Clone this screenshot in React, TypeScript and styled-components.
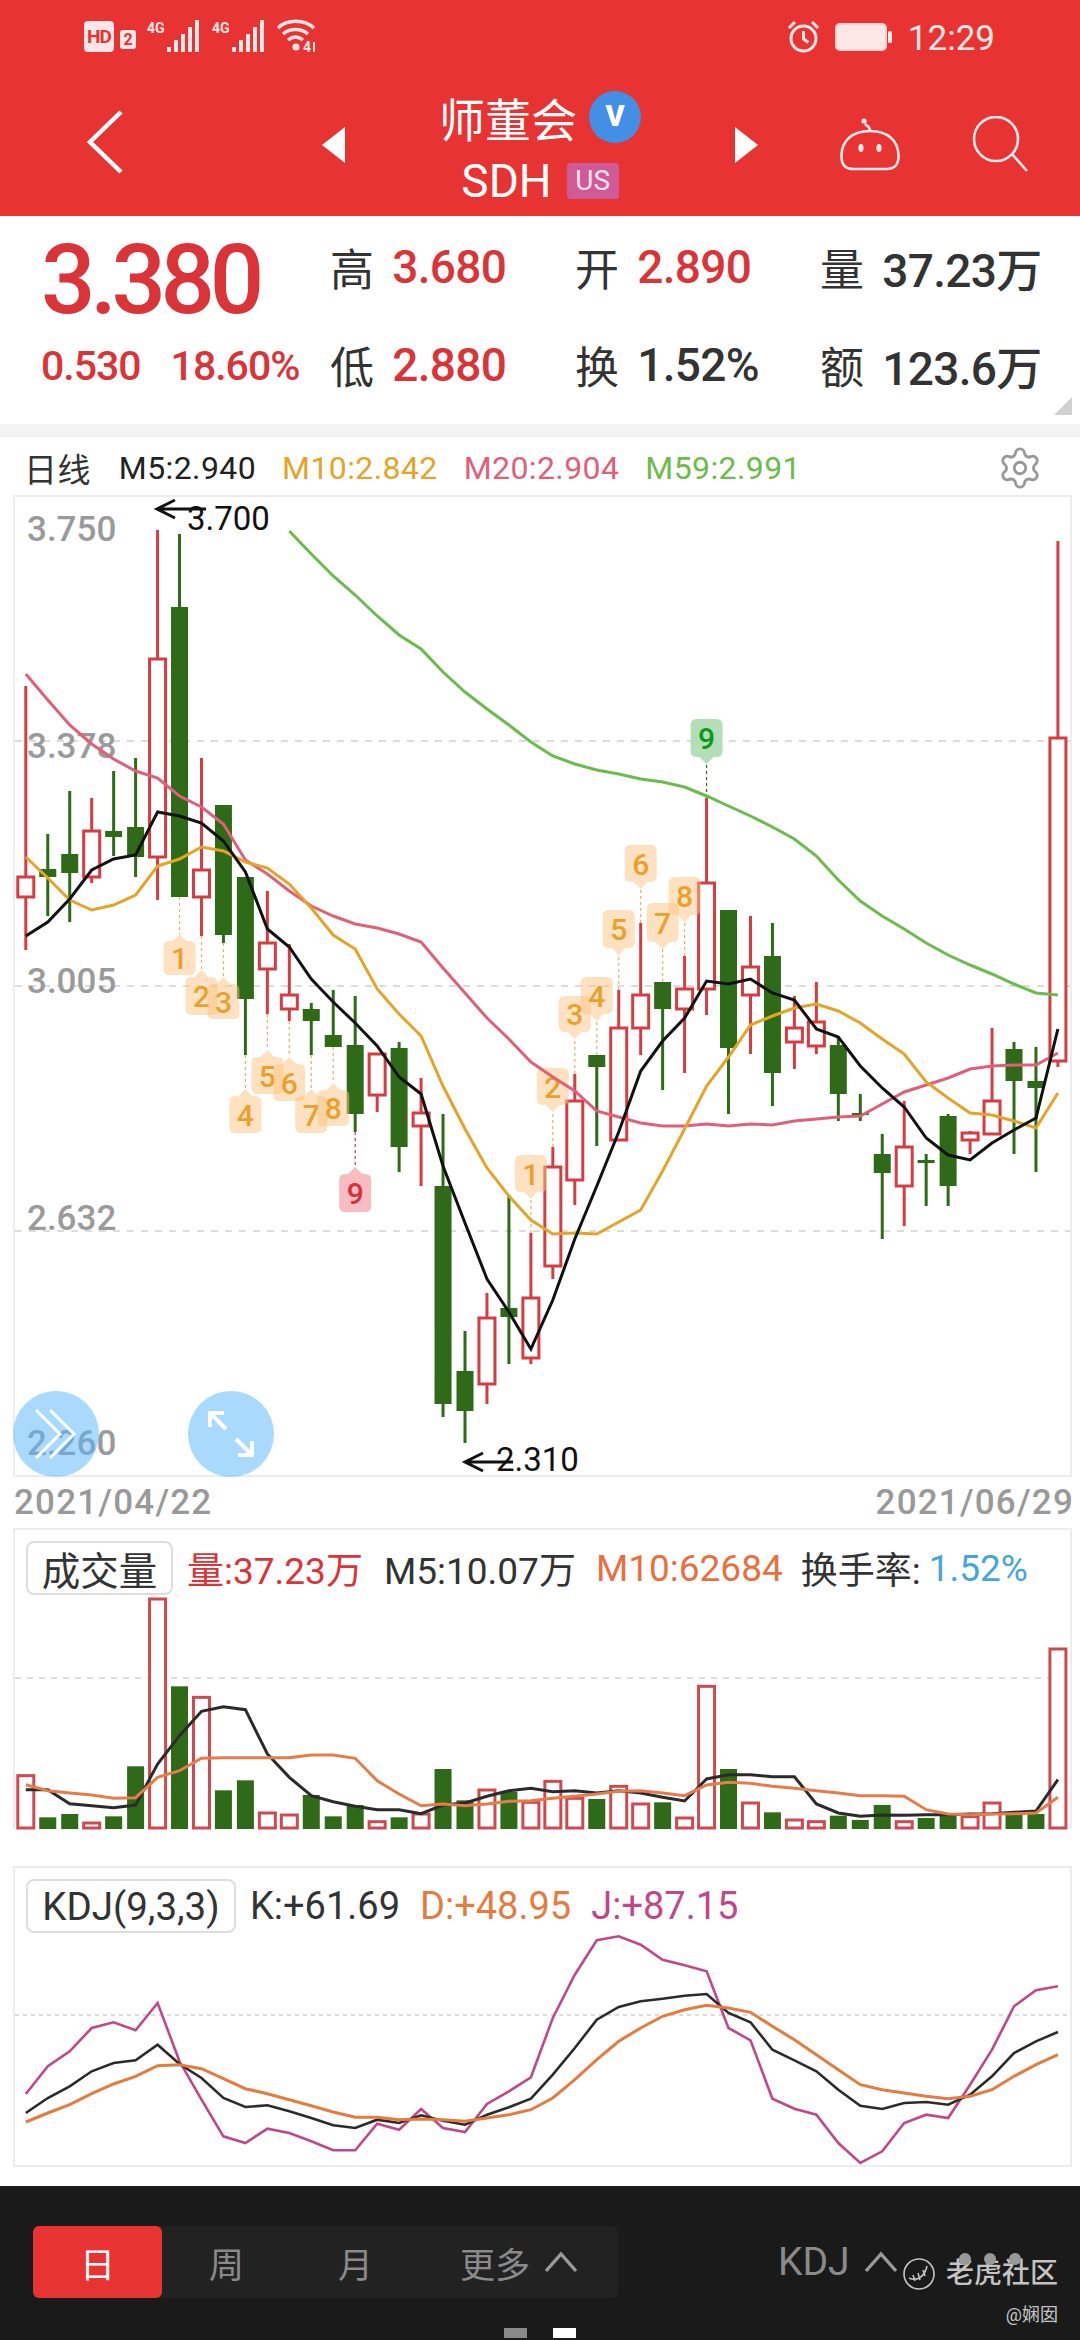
import React from "react";
import styled, { createGlobalStyle } from "styled-components";
import { Settings } from "lucide-react";

const FONT = `Roboto, "Noto Sans CJK SC", sans-serif`;
const RED = "#e83333";
const UP = "#d63c42";
const DOWN = "#2f6a18";

const GlobalStyle = createGlobalStyle`
  html, body { margin: 0; padding: 0; background: #fff; }
  body { font-family: ${FONT}; }
`;

// page coordinates of each session, so the arrays below read like the screen
const px = (i: number) => 25.8 + 21.96 * i;

type Candle = [number, number, number, number, "r" | "g"];

const candles: Candle[] = [
  [686, 950, 877, 897, "r"], [834, 916, 869, 877, "g"], [791, 922, 854, 873, "g"], [798, 883, 831, 877, "r"],
  [771, 856, 831, 837, "g"], [758, 877, 827, 857, "g"], [530, 900, 659, 857, "r"], [534, 897, 607, 897, "g"],
  [758, 936, 870, 897, "r"], [805, 943, 805, 935, "g"], [877, 1055, 877, 999, "g"], [891, 1014, 943, 969, "r"],
  [944, 1021, 995, 1009, "r"], [1003, 1055, 1009, 1021, "g"], [990, 1047, 1035, 1047, "g"], [996, 1132, 1045, 1114, "g"],
  [1054, 1112, 1054, 1095, "r"], [1042, 1172, 1048, 1147, "g"], [1078, 1186, 1113, 1126, "r"], [1114, 1417, 1186, 1404, "g"],
  [1331, 1443, 1371, 1411, "g"], [1293, 1404, 1318, 1384, "r"], [1195, 1364, 1308, 1317, "g"], [1233, 1364, 1298, 1358, "r"],
  [1147, 1279, 1167, 1266, "r"], [1074, 1205, 1101, 1180, "r"], [1055, 1146, 1055, 1067, "g"], [990, 1140, 1028, 1140, "r"],
  [923, 1055, 995, 1028, "r"], [982, 1090, 982, 1009, "g"], [956, 1073, 989, 1009, "r"], [798, 1015, 883, 989, "r"],
  [910, 1114, 910, 1048, "g"], [916, 1054, 967, 995, "r"], [923, 1106, 956, 1073, "g"], [996, 1069, 1028, 1042, "r"],
  [982, 1054, 1022, 1046, "r"], [1038, 1121, 1045, 1094, "g"], [1094, 1121, 1113, 1115, "g"], [1134, 1239, 1154, 1173, "g"],
  [1101, 1226, 1147, 1186, "r"], [1154, 1206, 1160, 1163, "g"], [1114, 1206, 1116, 1186, "g"], [1131, 1154, 1133, 1140, "r"],
  [1028, 1134, 1101, 1134, "r"], [1042, 1154, 1049, 1081, "g"], [1047, 1172, 1081, 1088, "g"], [541, 1067, 738, 1061, "r"],
];

const m5 = [936, 922, 899, 870, 859, 855, 812, 816, 823, 841, 872, 929, 947, 979, 1002, 1023, 1046, 1077, 1094, 1166, 1223, 1279, 1312, 1349, 1300, 1239, 1186, 1132, 1071, 1041, 1018, 981, 984, 979, 993, 1000, 1029, 1037, 1066, 1088, 1107, 1138, 1155, 1160, 1143, 1130, 1118, 1029];
const m10 = [857, 878, 900, 910, 905, 895, 866, 859, 847, 851, 862, 868, 884, 908, 935, 949, 989, 1014, 1036, 1086, 1129, 1168, 1196, 1220, 1234, 1233, 1234, 1222, 1210, 1171, 1129, 1086, 1057, 1025, 1016, 1008, 1004, 1011, 1023, 1039, 1054, 1082, 1098, 1113, 1115, 1121, 1128, 1093];
const m20 = [674, 700, 725, 744, 759, 771, 778, 796, 807, 824, 860, 874, 891, 906, 916, 924, 928, 934, 942, 968, 993, 1018, 1039, 1062, 1077, 1091, 1111, 1117, 1123, 1126, 1126, 1124, 1126, 1124, 1125, 1121, 1119, 1117, 1116, 1104, 1092, 1085, 1078, 1069, 1066, 1065, 1065, 1053];
const m59 = [531, 554, 576, 595, 616, 635, 649, 672, 692, 709, 725, 742, 756, 764, 770, 774, 779, 782, 787, 796, 806, 816, 827, 839, 856, 880, 901, 916, 929, 943, 955, 965, 974, 984, 993, 995];

// badges sit under the candle (tip up) for the first run, over it for the second
type Badge = { i: number; top: number; bottom: number; from: number; label: string; tip: "up" | "down"; kind?: "sell" | "buy" };
const badges: Badge[] = [
  { i: 7, top: 934, bottom: 975, from: 897, label: "1", tip: "up" },
  { i: 8, top: 970, bottom: 1015, from: 936, label: "2", tip: "up" },
  { i: 9, top: 977, bottom: 1019, from: 943, label: "3", tip: "up" },
  { i: 10, top: 1089, bottom: 1133, from: 1055, label: "4", tip: "up" },
  { i: 11, top: 1050, bottom: 1094, from: 1014, label: "5", tip: "up" },
  { i: 12, top: 1057, bottom: 1101, from: 1021, label: "6", tip: "up" },
  { i: 13, top: 1089, bottom: 1133, from: 1055, label: "7", tip: "up" },
  { i: 14, top: 1083, bottom: 1126, from: 1047, label: "8", tip: "up" },
  { i: 15, top: 1167, bottom: 1212, from: 1132, label: "9", tip: "up", kind: "sell" },
  { i: 23, top: 1155, bottom: 1199, from: 1233, label: "1", tip: "down" },
  { i: 24, top: 1068, bottom: 1112, from: 1147, label: "2", tip: "down" },
  { i: 25, top: 996, bottom: 1039, from: 1074, label: "3", tip: "down" },
  { i: 26, top: 977, bottom: 1021, from: 1055, label: "4", tip: "down" },
  { i: 27, top: 910, bottom: 955, from: 990, label: "5", tip: "down" },
  { i: 28, top: 845, bottom: 889, from: 923, label: "6", tip: "down" },
  { i: 29, top: 903, bottom: 949, from: 982, label: "7", tip: "down" },
  { i: 30, top: 877, bottom: 922, from: 956, label: "8", tip: "down" },
  { i: 31, top: 719, bottom: 764, from: 798, label: "9", tip: "down", kind: "buy" },
];

const volumeTops = [770, 895, 885, 912, 892, 742, 240, 502, 535, 814, 784, 882, 888, 828, 892, 858, 908, 895, 885, 750, 844, 813, 818, 850, 787, 838, 840, 802, 855, 850, 897, 502, 750, 852, 880, 903, 908, 890, 903, 858, 908, 897, 890, 893, 852, 888, 885, 390];
const volM5 = [812, 812, 854, 860, 866, 858, 735, 650, 577, 563, 572, 705, 775, 830, 848, 862, 872, 872, 884, 858, 852, 832, 815, 808, 818, 815, 822, 815, 822, 835, 846, 780, 767, 767, 773, 773, 855, 882, 892, 888, 889, 887, 887, 885, 884, 880, 876, 782];
const volM10 = [797, 815, 822, 828, 838, 836, 775, 755, 718, 716, 716, 716, 716, 708, 708, 718, 785, 825, 860, 855, 860, 855, 847, 845, 838, 832, 825, 817, 815, 822, 830, 798, 790, 793, 802, 808, 815, 822, 830, 830, 832, 872, 885, 887, 885, 884, 882, 835];

const kdjJ = [798, 715, 670, 600, 583, 607, 525, 700, 815, 925, 945, 902, 915, 940, 967, 967, 887, 905, 843, 900, 912, 828, 790, 748, 570, 440, 337, 325, 350, 395, 412, 430, 600, 637, 812, 842, 860, 945, 1005, 970, 885, 860, 870, 770, 665, 535, 487, 475];
const kdjK = [855, 810, 775, 730, 705, 697, 650, 708, 750, 810, 837, 832, 850, 870, 892, 900, 875, 885, 862, 878, 890, 860, 838, 812, 740, 660, 575, 537, 520, 512, 503, 498, 555, 583, 665, 697, 730, 785, 833, 843, 825, 822, 830, 800, 745, 675, 640, 612];
const kdjD = [882, 855, 830, 797, 768, 745, 713, 710, 722, 752, 782, 797, 815, 833, 852, 868, 868, 875, 873, 875, 880, 870, 860, 845, 810, 755, 695, 640, 600, 565, 545, 532, 540, 553, 595, 635, 680, 725, 770, 785, 795, 805, 812, 805, 785, 745, 710, 680];

const polyline = (ys: number[], offset = 0, map: (y: number) => number = y => y) =>
  ys.map((y, i) => `${px(i + offset).toFixed(1)},${map(y).toFixed(1)}`).join(" ");

const badgePath = (cx: number, top: number, bottom: number, tip: "up" | "down") => {
  const l = cx - 16, r = cx + 16, c = 6, t = 7;
  if (tip === "up") {
    return `M${cx} ${top} L${cx + 7} ${top + t} H${r - c} Q${r} ${top + t} ${r} ${top + t + c} V${bottom - c} Q${r} ${bottom} ${r - c} ${bottom} H${l + c} Q${l} ${bottom} ${l} ${bottom - c} V${top + t + c} Q${l} ${top + t} ${l + c} ${top + t} H${cx - 7} Z`;
  }
  return `M${l + c} ${top} H${r - c} Q${r} ${top} ${r} ${top + c} V${bottom - t - c} Q${r} ${bottom - t} ${r - c} ${bottom - t} H${cx + 7} L${cx} ${bottom} L${cx - 7} ${bottom - t} H${l + c} Q${l} ${bottom - t} ${l} ${bottom - t - c} V${top + c} Q${l} ${top} ${l + c} ${top} Z`;
};

const badgeColors = {
  sell: { fill: "#f6bcc1", ink: "#d8303a", dot: "#b5434b" },
  buy: { fill: "#b4deb8", ink: "#0a9a1c", dot: "#2f6a18" },
  count: { fill: "rgba(252, 196, 130, 0.5)", ink: "#e9a02c", dot: "#e8b060" },
};

const Page = styled.div`
  width: 1080px;
  height: 2340px;
  overflow: hidden;
  background: #fff;
  display: flex;
  flex-direction: column;
`;

const Header = styled.header`
  height: 216px;
  background: ${RED};
  color: #fff;
  display: flex;
  flex-direction: column;
`;

const StatusBar = styled.div`
  height: 70px;
  padding: 20px 85px 0 84px;
  box-sizing: border-box;
  display: flex;
  align-items: flex-start;
  color: #fde6e6;
`;

const StatusGroup = styled.div`
  display: flex;
  align-items: flex-start;
  gap: 11px;
`;

const HdMark = styled.span`
  width: 30px;
  height: 31px;
  margin-top: 1px;
  border-radius: 4px;
  background: #fde6e6;
  color: ${RED};
  font-size: 19px;
  font-weight: 700;
  line-height: 31px;
  text-align: center;
  letter-spacing: -1px;
`;

const SimMark = styled.span`
  width: 16px;
  height: 19px;
  margin: 10px 0 0 -5px;
  border-radius: 3px;
  background: #fde6e6;
  color: ${RED};
  font-size: 16px;
  font-weight: 700;
  line-height: 19px;
  text-align: center;
`;

const Clock = styled.span`
  font-size: 35px;
  line-height: 36px;
  margin-top: 1px;
`;

const StatusRight = styled(StatusGroup)`
  margin-left: auto;
  gap: 15px;
`;

const NavBar = styled.nav`
  height: 146px;
  display: flex;
  align-items: flex-start;
  padding-left: 86px;
`;

const BackIcon = styled.svg`
  width: 38px;
  height: 64px;
  margin-top: 40px;
  flex: none;
`;

const Switcher = styled.div`
  width: 436px;
  margin: 57px 0 0 198px;
  display: flex;
  align-items: flex-start;
  justify-content: space-between;
  height: 35px;
`;

const Triangle = styled.span<{ $dir: "left" | "right" }>`
  width: 0;
  height: 0;
  border-top: 18px solid transparent;
  border-bottom: 18px solid transparent;
  ${({ $dir }) => ($dir === "left" ? "border-right: 23px solid #fff;" : "border-left: 23px solid #fff;")}
`;

const TitleBlock = styled.div`
  margin-top: -38px;
  display: flex;
  flex-direction: column;
  align-items: center;
`;

const NameRow = styled.div`
  display: flex;
  align-items: center;
  gap: 12px;
  height: 56px;
`;

const Name = styled.span`
  font-size: 46px;
  line-height: 56px;
  margin-top: 8px;
`;

const VerifiedBadge = styled.span`
  width: 52px;
  height: 52px;
  border-radius: 50%;
  background: #438fe6;
  font-size: 29px;
  font-weight: 900;
  line-height: 50px;
  text-align: center;
`;

const SymbolRow = styled.div`
  margin-top: 18px;
  display: flex;
  align-items: center;
  gap: 15px;
`;

const SymbolText = styled.span`
  font-size: 46px;
  line-height: 36px;
`;

const MarketTag = styled.span`
  width: 52px;
  height: 36px;
  border-radius: 3px;
  background: #cf5a96;
  color: #fbe2ee;
  font-size: 28px;
  line-height: 36px;
  text-align: center;
`;

const NavIcons = styled.div`
  margin: 46px 0 0 82px;
  display: flex;
  gap: 72px;
`;

const Quote = styled.section`
  position: relative;
  height: 208px;
  box-sizing: border-box;
  padding-top: 2px;
  display: flex;
`;

const PriceColumn = styled.div`
  width: 330px;
  padding-left: 41px;
  box-sizing: border-box;
`;

const Price = styled.div`
  margin-top: 18px;
  height: 88px;
  color: #da3338;
  font-size: 96px;
  font-weight: 500;
  line-height: 88px;
  letter-spacing: -5.4px;
`;

const Change = styled.div`
  display: flex;
  gap: 30px;
  color: #da3338;
  font-size: 41px;
  font-weight: 500;
  line-height: 84px;
  letter-spacing: -1px;
`;

const Stats = styled.div`
  display: grid;
  grid-template-columns: 245px 245px 245px;
  grid-auto-rows: 98px;
`;

const Stat = styled.div<{ $up?: boolean }>`
  display: flex;
  align-items: center;
  gap: 19px;
  color: ${({ $up }) => ($up ? "#da3338" : "#333")};
  font-size: 46px;
  font-weight: 500;
  letter-spacing: -0.7px;
`;

const StatLabel = styled.span`
  color: #333;
  font-size: 44px;
  font-weight: 400;
`;

const CornerMark = styled.span`
  position: absolute;
  right: 8px;
  bottom: 9px;
  width: 0;
  height: 0;
  border-left: 18px solid transparent;
  border-bottom: 18px solid #d0d0d0;
`;

const Divider = styled.div`
  height: 13px;
  background: #f3f3f3;
`;

const Legend = styled.div`
  height: 58px;
  box-sizing: border-box;
  padding: 4px 0 0 24px;
  display: flex;
  align-items: center;
  font-size: 32px;
  letter-spacing: 0.4px;
`;

const LegendTitle = styled.span`
  color: #333;
  font-size: 33px;
  margin-right: 28px;
`;

const LegendItem = styled.span<{ $color: string }>`
  color: ${({ $color }) => $color};
  margin-right: 26px;
`;

const GearSlot = styled.span`
  margin: 0 37px 0 auto;
  display: flex;
  color: #999;
`;

const ChartPanel = styled.div`
  position: relative;
  width: 1059px;
  height: 982px;
  margin-left: 13px;
  box-sizing: border-box;
  border: 2px solid #ececec;
`;

const Plot = styled.svg`
  display: block;
  overflow: visible;
`;

const AxisText = styled.text`
  font-family: ${FONT};
  font-size: 35px;
  font-weight: 500;
  fill: #9a9a9a;
`;

const ExtremeText = styled.text`
  font-family: ${FONT};
  font-size: 33px;
  fill: #111;
`;

const BadgeText = styled.text`
  font-family: ${FONT};
  font-size: 30px;
  font-weight: 500;
  text-anchor: middle;
`;

const RoundButton = styled.div<{ $left: number }>`
  position: absolute;
  left: ${({ $left }) => $left}px;
  bottom: -2px;
  width: 86px;
  height: 86px;
  border-radius: 50%;
  background: rgba(90, 185, 253, 0.52);
  display: flex;
  align-items: center;
  justify-content: center;
`;

const DateRow = styled.div`
  height: 50px;
  padding: 0 6px 0 14px;
  display: flex;
  justify-content: space-between;
  align-items: center;
  color: #999;
  font-size: 35px;
  font-weight: 500;
  letter-spacing: 1.2px;
`;

const IndicatorPanel = styled.div<{ $gap: number }>`
  width: 1059px;
  height: 301px;
  margin: ${({ $gap }) => $gap}px 0 0 13px;
  box-sizing: border-box;
  border: 2px solid #ececec;
  display: flex;
  flex-direction: column;
`;

const VolumePanel = styled(IndicatorPanel)`
  border-bottom: none;
`;

const PanelHead = styled.div<{ $size: number }>`
  height: 54px;
  margin-top: 11px;
  padding-left: 11px;
  display: flex;
  align-items: center;
  font-size: ${({ $size }) => $size}px;
  color: #333;
`;

const IndicatorTag = styled.span<{ $width: number }>`
  width: ${({ $width }) => $width}px;
  height: 54px;
  box-sizing: border-box;
  border: 2px solid #ddd;
  border-radius: 8px;
  display: flex;
  align-items: center;
  justify-content: center;
  margin-right: 14px;
  font-size: 38.5px;
  white-space: nowrap;
`;

const Reading = styled.span<{ $color?: string; $gap?: number }>`
  color: ${({ $color }) => $color || "#333"};
  margin-right: ${({ $gap }) => $gap ?? 20}px;
  white-space: nowrap;
`;

const BottomBar = styled.footer`
  position: relative;
  margin-top: 19px;
  height: 154px;
  background: #1a1a1a;
  display: flex;
  flex-direction: column;
`;

const ToolRow = styled.div`
  margin-top: 40px;
  padding-left: 33px;
  display: flex;
  align-items: center;
`;

const Periods = styled.div`
  width: 585px;
  height: 72px;
  border-radius: 6px;
  background: #222;
  display: flex;
`;

const PeriodTab = styled.span<{ $active?: boolean; $wide?: boolean }>`
  width: ${({ $wide }) => ($wide ? "198px" : "129px")};
  box-sizing: border-box;
  border-radius: 6px;
  display: flex;
  align-items: center;
  justify-content: center;
  gap: 14px;
  font-size: 35px;
  color: ${({ $active }) => ($active ? "#fff" : "#8a8a8a")};
  background: ${({ $active }) => ($active ? RED : "transparent")};
`;

const KdjSwitch = styled.span`
  margin-left: 160px;
  display: flex;
  align-items: center;
  gap: 14px;
  color: #8a8a8a;
  font-size: 39px;
`;

const Pager = styled.div`
  margin-top: 30px;
  display: flex;
  justify-content: center;
  gap: 26px;
  padding-right: 0;
`;

const PagerMark = styled.span<{ $active?: boolean }>`
  width: 23px;
  height: 10px;
  background: ${({ $active }) => ($active ? "#fff" : "#8a8a8a")};
`;

const Watermark = styled.div`
  position: absolute;
  right: 22px;
  top: 71px;
  display: flex;
  flex-direction: column;
  align-items: flex-end;
  color: #c4c4c4;
`;

const WatermarkLine = styled.div`
  position: relative;
  display: flex;
  align-items: center;
  gap: 11px;
  font-size: 28px;
  line-height: 34px;
  font-weight: 500;
`;

const WatermarkDots = styled.span`
  position: absolute;
  left: 56px;
  top: -4px;
  display: flex;
  gap: 13px;
`;

const WatermarkDot = styled.span`
  width: 12px;
  height: 12px;
  border-radius: 50%;
  background: #999;
`;

const WatermarkUser = styled.div`
  margin-top: 14px;
  font-size: 18px;
  line-height: 20px;
`;

function Signal () {
  return (
    <svg width="54" height="33" viewBox="0 0 54 33" overflow="visible">
      <text x="0" y="13" fontSize="14" fontWeight="700" fontFamily="Roboto" fill="currentColor">4G</text>
      <g fill="currentColor">
        <rect x="20" y="27" width="4" height="5" />
        <rect x="27" y="20" width="4" height="12" />
        <rect x="34" y="14" width="4" height="18" />
        <rect x="41" y="7" width="4" height="25" />
        <rect x="48" y="0" width="4" height="32" />
      </g>
    </svg>
  );
}

function Wifi () {
  return (
    <svg width="40" height="33" viewBox="0 0 40 33" fill="none" stroke="currentColor" strokeWidth="3.4" overflow="visible">
      <path d="M1 8 C10 -1 27 -1 37 8" />
      <path d="M6 14 C13 8 24 8 31 14" />
      <path d="M11 20 C16 16 21 16 26 20" />
      <circle cx="19" cy="27" r="3.6" fill="currentColor" stroke="none" />
      <text x="26" y="32" fontSize="14" fontWeight="700" fontFamily="Roboto" fill="currentColor" stroke="none">4</text>
      <path d="M37 22 V32" strokeWidth="2" />
    </svg>
  );
}

function AlarmIcon () {
  return (
    <svg width="33" height="33" viewBox="0 0 33 33" fill="none" stroke="currentColor" strokeWidth="3">
      <circle cx="16.5" cy="18.5" r="12.5" />
      <path d="M16.5 11 V19 L21.5 22.5" />
      <path d="M2 8 L8 2 M31 8 L25 2" />
    </svg>
  );
}

function Battery () {
  return (
    <svg width="58" height="28" viewBox="0 0 58 28" style={{ marginTop: 3 }}>
      <rect x="1" y="1" width="50" height="26" rx="4" fill="#fde6e6" stroke="#fbd0d0" strokeWidth="2" />
      <rect x="53" y="8" width="4" height="12" rx="1.5" fill="#fde6e6" />
    </svg>
  );
}

function Robot () {
  return (
    <svg width="60" height="55" viewBox="0 0 60 55" fill="none" stroke="#fdeaea" strokeWidth="2.6">
      <path d="M1.5 40 C1.5 24 13 15 30 15 C47 15 58.5 24 58.5 40 C58.5 50 54 53 46 53 H14 C6 53 1.5 50 1.5 40 Z" />
      <path d="M30 15 C30 10 27 10 25 8" />
      <circle cx="24" cy="5" r="2.6" fill="#fdeaea" stroke="none" />
      <ellipse cx="21" cy="32" rx="2.6" ry="4" fill="#fdeaea" stroke="none" />
      <ellipse cx="39" cy="32" rx="2.6" ry="4" fill="#fdeaea" stroke="none" />
    </svg>
  );
}

function SearchIcon () {
  return (
    <svg width="56" height="56" viewBox="0 0 56 56" fill="none" stroke="#fdeaea" strokeWidth="2.6">
      <circle cx="24" cy="23" r="22" />
      <path d="M40 38 L55 55" />
    </svg>
  );
}

function CandleChart () {
  return (
    <Plot width="1055" height="978" viewBox="15 497 1055 978">
      {[741, 986, 1231].map(y => (
        <line key={y} x1="15" x2="1070" y1={y} y2={y} stroke="#dcdcdc" strokeWidth="2" strokeDasharray="7 7" />
      ))}
      <AxisText x="27" y="541">3.750</AxisText>
      <AxisText x="27" y="758">3.378</AxisText>
      <AxisText x="27" y="993">3.005</AxisText>
      <AxisText x="27" y="1230">2.632</AxisText>
      <AxisText x="27" y="1455">2.260</AxisText>

      {candles.map(([wt, wb, bt, bb, side], i) => {
        const color = side === "r" ? UP : DOWN;
        const x = px(i);
        return (
          <g key={i}>
            <line x1={x} x2={x} y1={wt} y2={wb} stroke={color} strokeWidth="3" />
            {side === "r"
              ? <rect x={x - 8} y={bt} width="16" height={bb - bt} fill="#fff" stroke={color} strokeWidth="3" />
              : <rect x={x - 8.5} y={bt} width="17" height={bb - bt} fill={color} />}
          </g>
        );
      })}

      {badges.map(b => {
        const colors = badgeColors[b.kind === "sell" ? "sell" : b.kind === "buy" ? "buy" : "count"];
        const x = px(b.i);
        const tipY = b.tip === "up" ? b.top : b.bottom;
        const midY = b.tip === "up" ? (b.top + 7 + b.bottom) / 2 : (b.top + b.bottom - 7) / 2;
        return (
          <g key={`${b.i}-${b.label}`}>
            <line x1={x} x2={x} y1={b.from} y2={tipY} stroke={colors.dot} strokeWidth="1.2" strokeDasharray="3 3" />
            <path d={badgePath(x, b.top, b.bottom, b.tip)} fill={colors.fill} />
            <BadgeText x={x} y={midY + 11} fill={colors.ink}>{b.label}</BadgeText>
          </g>
        );
      })}

      <polyline points={polyline(m59, 12)} fill="none" stroke="#6cbb4c" strokeWidth="3" />
      <polyline points={polyline(m20)} fill="none" stroke="#e0607a" strokeWidth="3" />
      <polyline points={polyline(m10)} fill="none" stroke="#e3a428" strokeWidth="3" />
      <polyline points={polyline(m5)} fill="none" stroke="#111" strokeWidth="3" />

      <ExtremeText x="187" y="530">3.700</ExtremeText>
      <path d="M206 509 H157 M175 500 L157 509 L175 518" fill="none" stroke="#111" strokeWidth="3" />
      <ExtremeText x="496" y="1471">2.310</ExtremeText>
      <path d="M513 1462 H465 M483 1453 L465 1462 L483 1471" fill="none" stroke="#111" strokeWidth="3" />
    </Plot>
  );
}

function VolumeChart () {
  const toY = (y: number) => 1520 + y / 3;
  return (
    <Plot width="1055" height="234" viewBox="15 1596 1055 234">
      <line x1="15" x2="1070" y1="1679" y2="1679" stroke="#dcdcdc" strokeWidth="2" strokeDasharray="6 6" />
      {volumeTops.map((top, i) => {
        const x = px(i);
        const y = toY(top);
        const red = candles[i][4] === "r";
        return red
          ? <rect key={i} x={x - 8} y={y} width="16" height={1829 - y} fill="#fff" stroke="#cf4a50" strokeWidth="3" />
          : <rect key={i} x={x - 8.5} y={y} width="17" height={1830 - y} fill={DOWN} />;
      })}
      <polyline points={polyline(volM5, 0, toY)} fill="none" stroke="#2b2b2b" strokeWidth="3" />
      <polyline points={polyline(volM10, 0, toY)} fill="none" stroke="#e57c4a" strokeWidth="3" />
    </Plot>
  );
}

function KdjChart () {
  const toY = (y: number) => 1830 + y / 3;
  return (
    <Plot width="1055" height="232" viewBox="15 1935 1055 232">
      <line x1="15" x2="1070" y1="2017" y2="2017" stroke="#dcdcdc" strokeWidth="2" strokeDasharray="4 4" />
      <polyline points={polyline(kdjJ, 0, toY)} fill="none" stroke="#c0488a" strokeWidth="2.6" />
      <polyline points={polyline(kdjK, 0, toY)} fill="none" stroke="#2b2b2b" strokeWidth="2.6" />
      <polyline points={polyline(kdjD, 0, toY)} fill="none" stroke="#e57c3f" strokeWidth="3" />
    </Plot>
  );
}

const Caret = () => (
  <svg width="34" height="22" viewBox="0 0 34 22" fill="none" stroke="#9a9a9a" strokeWidth="3.4">
    <path d="M2 20 L17 3 L32 20" />
  </svg>
);

export default function App () {
  return (
    <Page>
      <GlobalStyle />
      <Header>
        <StatusBar>
          <StatusGroup>
            <HdMark>HD</HdMark>
            <SimMark>2</SimMark>
            <Signal />
            <Signal />
            <Wifi />
          </StatusGroup>
          <StatusRight>
            <AlarmIcon />
            <Battery />
            <Clock>12:29</Clock>
          </StatusRight>
        </StatusBar>
        <NavBar>
          <BackIcon viewBox="0 0 38 64" fill="none" stroke="#fff" strokeWidth="4.5">
            <path d="M35 2 L4 32 L35 62" />
          </BackIcon>
          <Switcher>
            <Triangle $dir="left" />
            <TitleBlock>
              <NameRow>
                <Name>师董会</Name>
                <VerifiedBadge>V</VerifiedBadge>
              </NameRow>
              <SymbolRow>
                <SymbolText>SDH</SymbolText>
                <MarketTag>US</MarketTag>
              </SymbolRow>
            </TitleBlock>
            <Triangle $dir="right" />
          </Switcher>
          <NavIcons>
            <Robot />
            <SearchIcon />
          </NavIcons>
        </NavBar>
      </Header>

      <Quote>
        <PriceColumn>
          <Price>3.380</Price>
          <Change>
            <span>0.530</span>
            <span>18.60%</span>
          </Change>
        </PriceColumn>
        <Stats>
          <Stat $up><StatLabel>高</StatLabel>3.680</Stat>
          <Stat $up><StatLabel>开</StatLabel>2.890</Stat>
          <Stat><StatLabel>量</StatLabel>37.23万</Stat>
          <Stat $up><StatLabel>低</StatLabel>2.880</Stat>
          <Stat><StatLabel>换</StatLabel>1.52%</Stat>
          <Stat><StatLabel>额</StatLabel>123.6万</Stat>
        </Stats>
        <CornerMark />
      </Quote>
      <Divider />

      <Legend>
        <LegendTitle>日线</LegendTitle>
        <LegendItem $color="#222">M5:2.940</LegendItem>
        <LegendItem $color="#e3a428">M10:2.842</LegendItem>
        <LegendItem $color="#e0607a">M20:2.904</LegendItem>
        <LegendItem $color="#6cbb4c">M59:2.991</LegendItem>
        <GearSlot><Settings size={46} strokeWidth={1.5} /></GearSlot>
      </Legend>

      <ChartPanel>
        <CandleChart />
        <RoundButton $left={-2}>
          <svg width="44" height="52" viewBox="0 0 44 52" fill="none" stroke="#fff" strokeWidth="3">
            <path d="M2 2 L26 26 L2 50" />
            <path d="M16 2 L40 26 L16 50" />
          </svg>
        </RoundButton>
        <RoundButton $left={173}>
          <svg width="48" height="48" viewBox="0 0 48 48" fill="none" stroke="#fff" strokeWidth="4">
            <path d="M3 3 L19 19 M3 17 V3 H17" />
            <path d="M45 45 L29 29 M45 31 V45 H31" />
          </svg>
        </RoundButton>
      </ChartPanel>

      <DateRow>
        <span>2021/04/22</span>
        <span>2021/06/29</span>
      </DateRow>

      <VolumePanel $gap={1}>
        <PanelHead $size={37}>
          <IndicatorTag $width={147}>成交量</IndicatorTag>
          <Reading $color="#da3338" $gap={21}>量:37.23万</Reading>
          <Reading $gap={20}>M5:10.07万</Reading>
          <Reading $color="#e8703f" $gap={18}>M10:62684</Reading>
          <Reading $gap={8}>换手率:</Reading>
          <Reading $color="#46a5dc" $gap={0}>1.52%</Reading>
        </PanelHead>
        <VolumeChart />
      </VolumePanel>

      <IndicatorPanel $gap={37}>
        <PanelHead $size={38}>
          <IndicatorTag $width={210}>KDJ(9,3,3)</IndicatorTag>
          <Reading>K:+61.69</Reading>
          <Reading $color="#e57c3f">D:+48.95</Reading>
          <Reading $color="#c0488a">J:+87.15</Reading>
        </PanelHead>
        <KdjChart />
      </IndicatorPanel>

      <BottomBar>
        <ToolRow>
          <Periods>
            <PeriodTab $active>日</PeriodTab>
            <PeriodTab>周</PeriodTab>
            <PeriodTab>月</PeriodTab>
            <PeriodTab $wide>更多<Caret /></PeriodTab>
          </Periods>
          <KdjSwitch>KDJ<Caret /></KdjSwitch>
        </ToolRow>
        <Pager>
          <PagerMark />
          <PagerMark $active />
        </Pager>
        <Watermark>
          <WatermarkLine>
            <svg width="32" height="32" viewBox="0 0 32 32" fill="none" stroke="#c4c4c4" strokeWidth="1.6">
              <circle cx="16" cy="16" r="15" />
              <path d="M6 20 C14 24 22 18 24 8 M10 17 L12 23 M15 15 L17 22 M20 12 L22 18" />
            </svg>
            老虎社区
            <WatermarkDots>
              <WatermarkDot />
              <WatermarkDot />
              <WatermarkDot />
            </WatermarkDots>
          </WatermarkLine>
          <WatermarkUser>@娴囡</WatermarkUser>
        </Watermark>
      </BottomBar>
    </Page>
  );
}
